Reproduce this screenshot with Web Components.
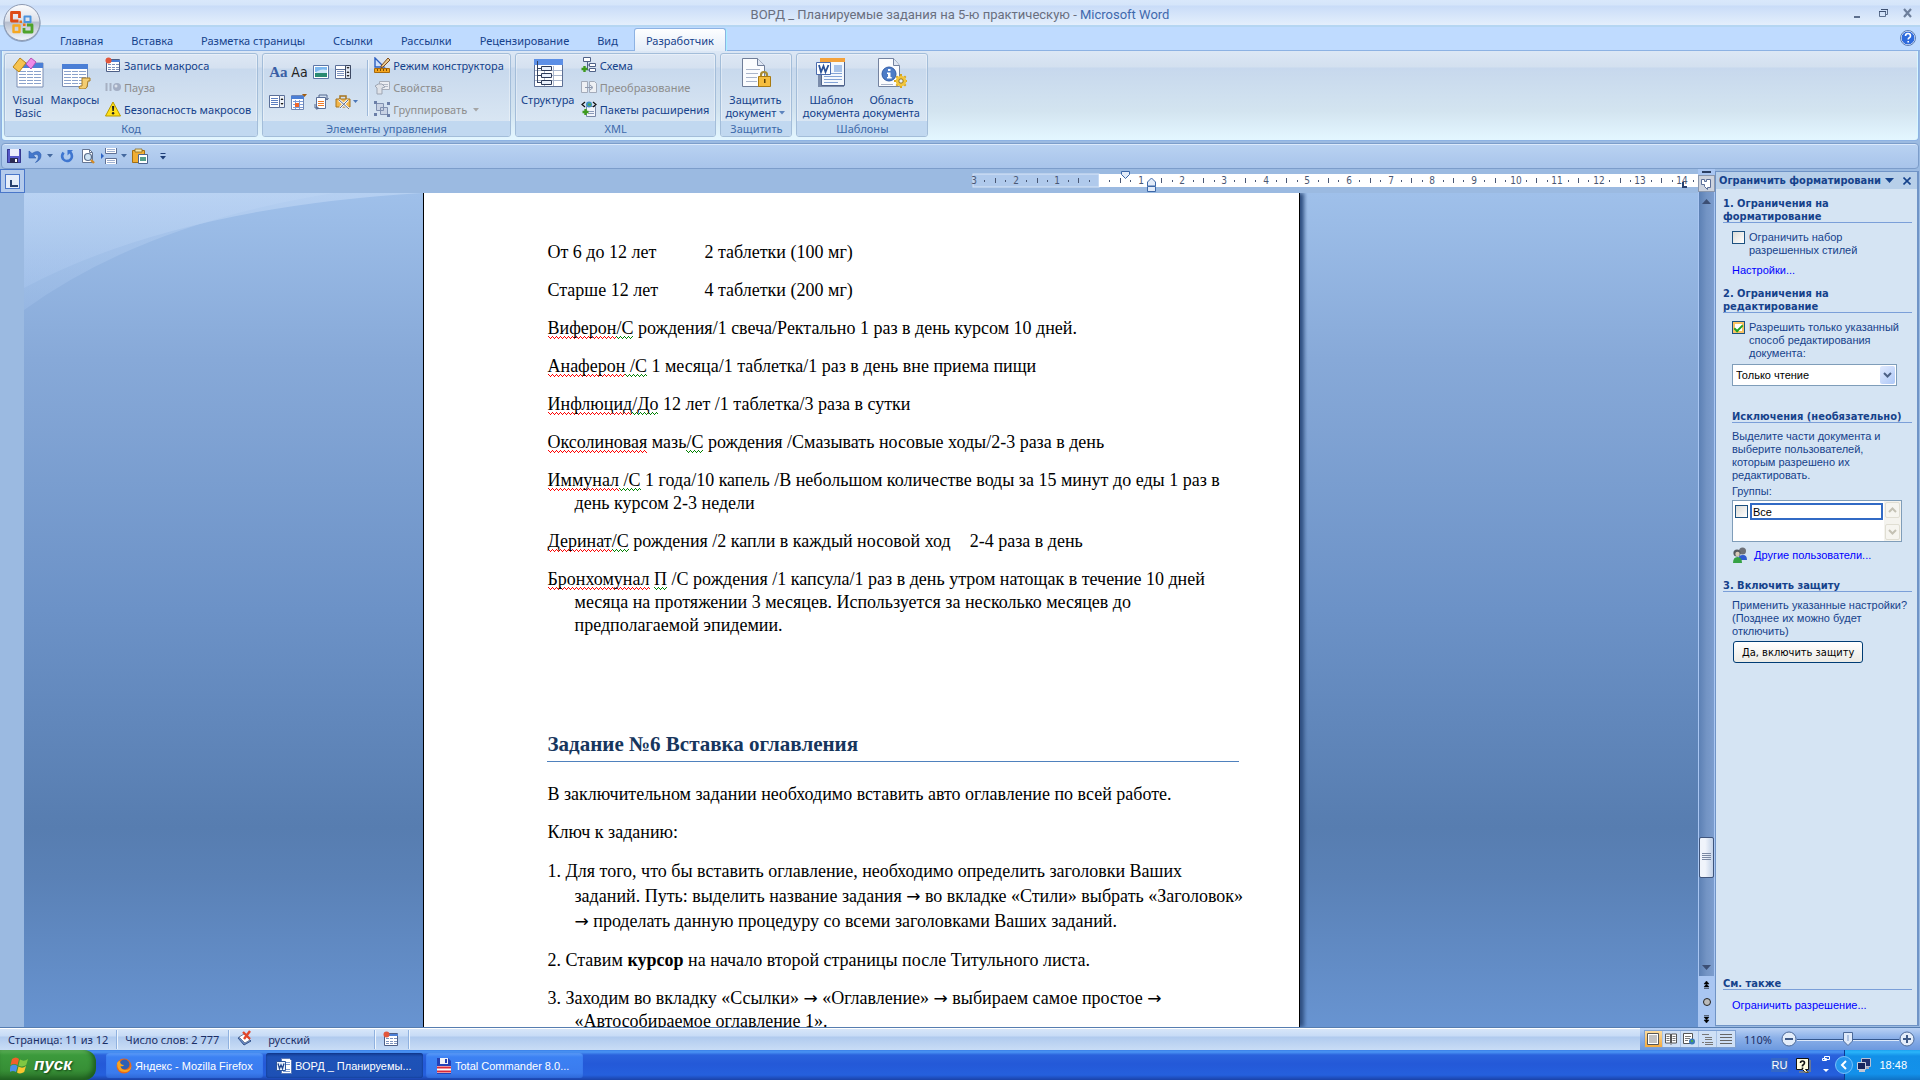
<!DOCTYPE html>
<html lang="ru">
<head>
<meta charset="utf-8">
<title>ВОРД _ Планируемые задания на 5-ю практическую - Microsoft Word</title>
<style>
html,body{margin:0;height:100%;overflow:hidden;background:#9bbae1}
</style>
</head>
<body>
<word-app></word-app>
<script>
const ICONS = {
orb:`<svg viewBox="0 0 40 40" width="40" height="40"><defs><linearGradient id="o" x1="0" y1="0" x2="0" y2="1"><stop offset="0" stop-color="#fdfdfe"/><stop offset=".45" stop-color="#dbe0ea"/><stop offset=".5" stop-color="#b7bfcf"/><stop offset="1" stop-color="#f4f7fb"/></linearGradient></defs><circle cx="20" cy="20.500" r="18.500" fill="#6d7f9c" opacity=".6"/><circle cx="20" cy="19.500" r="18" fill="url(#o)" stroke="#8e9bb3"/><g fill="none" stroke-width="2.800" stroke-linejoin="round"><path d="M17.500 15v-5.500h-8v8.500h7" stroke="#dd4b16"/><path d="M22.500 13.500h6v5.500h-6z" stroke="#4b93dd" stroke-width="2"/><path d="M11.500 22.500h6v6.500h-6z" stroke="#f6a821" stroke-width="2.400"/><path d="M22 25v4h8v-7h-5" stroke="#4fa32a"/></g><path d="M17.500 17.500h2.500v2.500h-2.500zM21 20.500h2.500V23H21z" fill="#e8731a"/></svg>`,
vb:`<svg viewBox="0 0 32 32" width="32" height="32"><path d="M5 6h26v24H5z" fill="#fff" stroke="#7b8eb4"/><path d="M5 6h26v5H5z" fill="#4b7fd6"/><path d="M7 14.500h22M7 17.500h22M7 20.500h22M7 23.500h22M7 26.500h22" stroke="#8aa2cc"/><path d="M14.500 12v17M21.500 12v17" stroke="#fff"/><path d="M1 10 8 1l6 5-7 9z" fill="#f6c350" stroke="#b98316"/><path d="m14 7 5-6 5 4-5 7z" fill="#ee8be8" stroke="#b653b5"/></svg>`,
macros:`<svg viewBox="0 0 32 32" width="32" height="32"><path d="M3.500 7.500h25v22h-25z" fill="#fff" stroke="#7b8eb4"/><path d="M3 7h26v5H3z" fill="#4b7fd6"/><path d="M5 14.500h22M5 17.500h22M5 20.500h22M5 23.500h22M5 26.500h22" stroke="#8aa2cc"/><path d="M12.500 13v16M19.500 13v16" stroke="#fff"/><path d="M23 21h8v3h-2l-1 6q-1 2-3 2h-4q-2-2 0-3h2z" fill="#f3cd73" stroke="#a77b25"/></svg>`,
record:`<svg viewBox="0 0 16 16" width="16" height="16"><path d="M1.500 2.500h13v12h-13z" fill="#fff" stroke="#4d5f86"/><path d="M4 3h11v2H4z" fill="#4b7fd6"/><path d="M3 7.500h3M7 7.500h3M11 7.500h3M3 10.500h3M7 10.500h3M11 10.500h3M3 12.500h3M7 12.500h3M11 12.500h3" stroke="#7d92bd"/><circle cx="3.500" cy="3.500" r="3" fill="#e2563b"/></svg>`,
pause:`<svg viewBox="0 0 16 16" width="16" height="16"><path d="M.500 4h2v8h-2zM4.500 4h2v8h-2z" fill="#a6b0c2"/><circle cx="12" cy="8" r="4" fill="#a3aec4"/><circle cx="11" cy="7" r="1.500" fill="#d9dfe9"/></svg>`,
warn:`<svg viewBox="0 0 16 16" width="16" height="16"><path d="M8 1 15.500 15H.5z" fill="#ffe019" stroke="#b79a00" stroke-linejoin="round"/><path d="M7 5h2.200l-.4 5H7.400z" fill="#222"/><circle cx="8.100" cy="12.300" r="1.200" fill="#222"/></svg>`,
pic:`<svg viewBox="0 0 16 16" width="16" height="16"><path d="M.5 1.500h15v13H.5z" fill="#fff" stroke="#5d76a6"/><path d="M2 3h12v5H2z" fill="#7db8ef"/><path d="M2 9q5-5 12-3v3z" fill="#cfe6f8"/><path d="M2 9h12v4H2z" fill="#2a8a72"/></svg>`,
combo:`<svg viewBox="0 0 16 16" width="16" height="16"><path d="M.5 1.500h15v4H.5zM.5 5.500h10v9H.5z" fill="#fff" stroke="#5b6f98"/><path d="M10.500 1.500h5v13h-5z" fill="#dfe5f0" stroke="#3d4963"/><path d="M2 7.500h7M2 9.500h7M2 11.500h7" stroke="#7d92bd"/><path d="M11.500 3h3L13 5zM11.500 9h3L13 7zM11.500 11h3L13 13z" fill="#222"/></svg>`,
list:`<svg viewBox="0 0 16 16" width="16" height="16"><path d="M.5 1.500h10v12H.5z" fill="#fff" stroke="#5b6f98"/><path d="M10.500 1.500h5v12h-5z" fill="#eef2f8" stroke="#5b6f98"/><path d="M2 4.500h7M2 6.500h7M2 8.500h7M2 10.500h7" stroke="#5d7fc0"/><path d="M11.500 6h3L13 4zM11.500 9h3L13 11z" fill="#111"/></svg>`,
cal:`<svg viewBox="0 0 16 16" width="16" height="16"><path d="M.5 1.500h12v14H.5z" fill="#fff" stroke="#6e86b5"/><path d="M0 2h13v3H0z" fill="#4b7fd6"/><path d="M2 7.500h10M2 10.500h10M2 13.500h10M4.500 6v9M8.500 6v9" stroke="#7d9bd6"/><path d="M4 9h4v4H4z" fill="#f0662a"/><path d="M11 0h5l-2.500 3z" fill="#a05c10"/></svg>`,
formpg:`<svg viewBox="0 0 16 16" width="16" height="16"><path d="M3.500 3.500h9v11h-9z" fill="#fff" stroke="#5b6f98"/><path d="M5 7.500h6M5 9.500h6M5 11.500h6" stroke="#ef7b28"/><path d="M6 3V1h8v4M2 10v4h3M12.500 4l1.500 2 1.500-2M3.500 12.500 5.500 14l-2 1.500" fill="none" stroke="#55698f"/></svg>`,
tools:`<svg viewBox="0 0 24 16" width="24" height="16"><path d="M1 5h14v8H1z" fill="#f2b64a" stroke="#a7741c"/><path d="M5 5V2h6v3" fill="none" stroke="#a7741c" stroke-width="1.500"/><path d="m4 6 10 9M13 6l-8 8" stroke="#f2f4f8" stroke-width="2.600"/><path d="m4 6 10 9M13 6l-8 8" stroke="#62708c"/><path d="M18 6h5l-2.500 3z" fill="#4a76b8"/></svg>`,
design:`<svg viewBox="0 0 16 16" width="16" height="16"><path d="M1 1v9h9z" fill="#cfe0fb" stroke="#2c5fc0" stroke-width="1.400"/><path d="M.5 11.500h15v4H.5z" fill="#f4a51d" stroke="#a8690a"/><path d="M3.500 12v2M6.500 12v2M9.500 12v2M12.500 12v2" stroke="#7a4b04"/><path d="m7 9 7-8 2 2-7 7-2 .5z" fill="#e9c98c" stroke="#7d4a1c"/></svg>`,
props:`<svg viewBox="0 0 16 16" width="16" height="16"><path d="M5.500 2.500h10v8h-10z" fill="#eceef2" stroke="#a7aeba"/><path d="M8 5.500h6M8 7.500h6" stroke="#b4bac6"/><path d="M1 7q3-3 7-2l3 3-3 1v6H3V9z" fill="#dfe2e8" stroke="#9da5b3"/></svg>`,
group:`<svg viewBox="0 0 16 16" width="16" height="16"><path d="M2.500 2.500h7v7h-7zM6.500 6.500h7v7h-7z" fill="#c8d2e4" stroke="#8090b0"/><path d="M0 0h3v3H0zM13 1h3v3h-3zM0 12h3v3H0zM13 13h3v3h-3z" fill="#6b7fa8"/></svg>`,
struct:`<svg viewBox="0 0 32 32" width="32" height="32"><path d="M2.500 2.500h28v27h-28z" fill="#fff" stroke="#5c6f94"/><path d="M2 2h29v6H2z" fill="#5c8fe6"/><path d="M3 13.500h27M3 18.500h27M3 23.500h27M12.500 9v20M21.500 9v20" stroke="#a9b6cd"/><path d="M5.500 4v22M5.500 11.500h4M5.500 18.500h4M5.500 25.500h4" stroke="#33415e" fill="none"/><path d="M9.500 9.500h10v4h-10zM9.500 16.500h10v4h-10zM9.500 23.500h10v4h-10z" fill="#e9f0fb" stroke="#2c3a58"/></svg>`,
schema:`<svg viewBox="0 0 16 16" width="16" height="16"><path d="M2.500.5h7v4h-7zM8.500 6.500h6v3h-6zM8.500 11.500h6v3h-6z" fill="#fff" stroke="#4f6186"/><path d="M6.500 5v8h2M6.500 8h2" fill="none" stroke="#4f6186"/><path d="M3.500 9v6M.5 12h6" stroke="#3c9a1d" stroke-width="2.400"/></svg>`,
transf:`<svg viewBox="0 0 16 16" width="16" height="16"><path d="M.5 2.500h6v11h-6zM8.500 2.500h5l2 2v9h-7z" fill="#eef0f4" stroke="#a3abba"/><path d="M4 8.500h7M9 6l3 2.500L9 11" fill="none" stroke="#8d98ae"/></svg>`,
packs:`<svg viewBox="0 0 16 16" width="16" height="16"><path d="M5.500 5.500h9v10h-9z" fill="#f1f4fa" stroke="#7887a6"/><path d="M7 10.500h6M7 12.500h6" stroke="#8c9bb9"/><path d="M4 1 1 3.500 4 6M12 1l3 2.500L12 6" fill="none" stroke="#111" stroke-width="1.200"/><circle cx="8" cy="3.500" r="3" fill="#3e8fc4"/><path d="M7 2.500h3v2H7z" fill="#4bab4a"/><path d="M4.500 8v6M1.500 11h6" stroke="#3c9a1d" stroke-width="2.400"/></svg>`,
protect:`<svg viewBox="0 0 32 32" width="32" height="32"><path d="M3.500 1.500h15l7 7v21h-22z" fill="#fbfcfe" stroke="#6f7d98"/><path d="M18.500 1.500v7h7" fill="#dfe6f2" stroke="#6f7d98"/><path d="M7 12.500h14M7 16.500h12M7 20.500h11M7 24.500h11" stroke="#aab5ca"/><path d="M22 20v-2q0-3 3-3t3 3v2" fill="none" stroke="#a98b32" stroke-width="2.200"/><path d="M19.500 19.500h12v10h-12z" fill="#f5bd3e" stroke="#a87a12"/><path d="M25 22h1.500v4H25z" fill="#5b3f05"/></svg>`,
tmpl:`<svg viewBox="0 0 32 32" width="32" height="32"><path d="M3 10h26v20H3z" fill="#7b8cab"/><path d="M6.500 2.500h23v26h-23z" fill="#f4f8fd" stroke="#50648c"/><path d="M5 1h25v4H5z" fill="#f3a23b"/><path d="M9 16.500h18M9 19.500h18M9 22.500h18M9 25.500h14" stroke="#83a3d6"/><path d="M19 8h8v7h-8z" fill="#a7c2e8"/><path d="M1.500 5.500h14v12h-14z" fill="#fff" stroke="#4b6cae"/><path d="m4 8 2 7 2.500-6 2 6 3-7" fill="none" stroke="#2a5298" stroke-width="1.800"/></svg>`,
area:`<svg viewBox="0 0 32 32" width="32" height="32"><path d="M3.500 1.500h15l6 7v21h-21z" fill="#fbfcfe" stroke="#7483a0"/><path d="M18.500 1.500v7h6" fill="#dfe6f2" stroke="#7483a0"/><path d="M6 27.500h12" stroke="#aab5ca"/><circle cx="14" cy="17" r="7" fill="#4d7cc7" stroke="#2f5ba6"/><path d="M13 12h2.500v2H13zM12 15.500h3.500v4.500h1.200v1.500H12V20h1v-3h-1z" fill="#fff"/><path d="M26 17v3M26 28v3M19 24h3M30 24h2M21.300 19.300l2 2M28.700 26.700l2 2M21.300 28.700l2-2M28.700 21.300l2-2" stroke="#d7a51e" stroke-width="2"/><circle cx="26" cy="24" r="3.800" fill="none" stroke="#f2c53c" stroke-width="3"/><circle cx="26" cy="24" r="2.200" fill="#e8f0fa" stroke="#9a7410"/></svg>`,
help:`<svg viewBox="0 0 16 16" width="16" height="16"><circle cx="8" cy="8" r="7" fill="#2f6bdc" stroke="#fff"/><circle cx="8" cy="8" r="7.500" fill="none" stroke="#3a5f9f" stroke-width=".8"/><path d="M5.500 6q0-2.500 2.500-2.500T10.500 6q0 1.200-1.500 2-.8.500-.8 1.500M8.200 11v1.500" fill="none" stroke="#fff" stroke-width="1.600"/></svg>`,
save:`<svg viewBox="0 0 16 16" width="16" height="16"><path d="M1 1h14v14H1z" fill="#5558c9"/><path d="M1.500 1.500h13v13h-13z" fill="none" stroke="#35378f"/><path d="M4 1h9v7H4z" fill="#eceefb"/><path d="M4 10h8v5H4z" fill="#2a2b55"/><path d="M9 11h2v3H9z" fill="#fff"/></svg>`,
undo:`<svg viewBox="0 0 16 16" width="16" height="16"><path d="M2 3v7h7L6.500 7.500Q11 4.500 11.500 9q0 3-3 5.500 6-2.500 5.500-8Q12 1 5 5.500z" fill="#4478cc" stroke="#2d5cab" stroke-width=".6"/></svg>`,
redo:`<svg viewBox="0 0 16 16" width="16" height="16"><path d="M4.500 4.500Q2 8 4 11q2.500 3 6.300 1.500Q14 10.500 12.500 6 12 5 11 4" fill="none" stroke="#3f76d0" stroke-width="2.600"/><path d="M8.500 2H14l-5.500 5.500z" fill="#3f76d0"/></svg>`,
preview:`<svg viewBox="0 0 16 16" width="16" height="16"><path d="M2.500 1.500h7l3 3v10h-10z" fill="#fff" stroke="#667693"/><path d="M9.500 1.500v3h3" fill="none" stroke="#667693"/><circle cx="8" cy="9" r="3.500" fill="#cfe4f4" stroke="#5b6e8d" stroke-width="1.200"/><path d="m11 12 3 3" stroke="#d08a28" stroke-width="2.400"/></svg>`,
pbreak:`<svg viewBox="0 0 16 16" width="16" height="16"><path d="M4.500 0v5.500h11V0M4.500 16v-5.500h11V16" fill="#fff" stroke="#5f7196"/><path d="M6 1.500h8M6 3.500h8M6 12.500h8M6 14.500h8" stroke="#9fb0d0"/><path d="M0 5v6l3-3z" fill="#2f65c4"/></svg>`,
paste:`<svg viewBox="0 0 16 16" width="16" height="16"><path d="M.5 2.500h12v12H.5z" fill="#f0ae35" stroke="#a36f12"/><path d="M3 1h7v3H3z" fill="#f8e7a8" stroke="#8c6a20" stroke-width=".8"/><path d="M6.500 6.500h9v9h-9z" fill="#fff" stroke="#4d658f"/><path d="M8 9h6v4H8z" fill="#54a08c"/></svg>`,
down:`<svg viewBox="0 0 6 4" width="6" height="4"><path d="M0 0h6L3 3.500z" fill="currentColor"/></svg>`,
more:`<svg viewBox="0 0 6 8" width="6" height="8"><path d="M.5 1.500h5" stroke="#1f3f78"/><path d="M0 4h6L3 7.500z" fill="#1f3f78"/></svg>`,
users:`<svg viewBox="0 0 16 16" width="16" height="16"><circle cx="10.500" cy="4" r="3.500" fill="#6d7077"/><path d="M6 13q0-5 5-5 4 0 4 5z" fill="#2f5bd0"/><circle cx="5" cy="6" r="3.600" fill="#555a60"/><circle cx="5.500" cy="7" r="2.200" fill="#d9c9b8"/><path d="M1 16q0-6 4.500-6T10 16z" fill="#35a244"/></svg>`,
proof:`<svg viewBox="0 0 18 18" width="18" height="18"><path d="m2 8 7-3 6 6-7 4z" fill="#6a8bc4" stroke="#35558f"/><path d="m3 7 5-3 6 6-5 3z" fill="#fff" stroke="#6d7f9c"/><path d="m7 2 7 7M14 1 8 9" stroke="#e2472a" stroke-width="2.400"/></svg>`,
flag:`<svg viewBox="0 0 20 20" width="20" height="20"><path d="M2 4q4-3 7 0L7.500 10q-3-2-7 0z" fill="#f0602a"/><path d="M10 4.500q4 2.500 8-.5l-1.800 6q-4 2.500-7.700.5z" fill="#7fc742"/><path d="M.5 11q3.500-2.500 7 0L6 17q-3-2-6.500 0z" fill="#4b8fe8"/><path d="M8.500 11.500q4 2.500 7.500-.5l-1.800 6q-4 2.500-7.200.5z" fill="#fbc62f"/></svg>`,
ff:`<svg viewBox="0 0 16 16" width="16" height="16"><circle cx="8" cy="8" r="7.500" fill="#e8671b"/><circle cx="8.500" cy="6.500" r="5" fill="#2f5fb5"/><path d="M1 5q0 9 8 9 5 0 6.500-6-2 4-6 4Q5 12 4.500 8 7 9 8 7 4 7 4 3 2 3 1 5z" fill="#f9a51f"/></svg>`,
word:`<svg viewBox="0 0 16 16" width="16" height="16"><path d="M5.500.5h8l2 2v13h-10z" fill="#fff" stroke="#5b7ab8"/><path d="M7 4.500h7M7 6.500h7M7 11.500h7M7 13.500h7" stroke="#7d9bd4"/><path d="M.5 3.500h9v9h-9z" fill="#e9f0fc" stroke="#2a549c"/><path d="m2 5.500 1.500 5L5 7l1.500 3.500L8 5.500" fill="none" stroke="#1f4690" stroke-width="1.300"/></svg>`,
floppy:`<svg viewBox="0 0 16 16" width="16" height="16"><path d="M1 0h11l3 3v13H1z" fill="#2342b8"/><path d="M4 0h8v6H4z" fill="#f0f2f8"/><path d="M9 1h2v4H9z" fill="#2342b8"/><path d="M1 8h14v7H1z" fill="#fff"/><path d="M1 9.500h14M1 13.500h14" stroke="#d8283a" stroke-width="2"/></svg>`,
langhelp:`<svg viewBox="0 0 16 16" width="16" height="16"><path d="M1.500 1.500h12v11h-3l3 3h-3l-3-3h-6z" fill="#fffce0" stroke="#111"/><path d="M15 3v12M14 15H4" stroke="#a5925a"/><path d="M5.500 6q0-2 2-2t2 2q0 1-2 2.500v1M7.500 10.500V12" fill="none" stroke="#111" stroke-width="1.600"/></svg>`,
minirest:`<svg viewBox="0 0 8 20" width="8" height="20"><path d="M2.500 1.500h5v3h-5zM.5 3.500h4v2h-4z" fill="none" stroke="#fff"/><path d="M1 14h6l-3 3z" fill="#fff"/></svg>`,
chev:`<svg viewBox="0 0 18 18" width="18" height="18"><circle cx="9" cy="9" r="8.500" fill="#2596ee" stroke="#8fd0ff" stroke-width=".8"/><path d="M11 5 7 9l4 4" fill="none" stroke="#fff" stroke-width="2"/></svg>`,
net:`<svg viewBox="0 0 16 16" width="16" height="16"><path d="M5.500 1.500h9v8h-9z" fill="#20306f" stroke="#b9c2d6"/><path d="M9 10h4v2H9z" fill="#aab"/><path d="M1.500 5.500h8v7h-8z" fill="#16245c" stroke="#c8cfdf"/><path d="M3 13h6v2H3z" fill="#c3c8d4"/></svg>`,
minus:`<svg viewBox="0 0 16 16" width="16" height="16"><circle cx="8" cy="8" r="7" fill="#e3edfa" stroke="#4c6a9a"/><path d="M4 7h8v2H4z" fill="#3f5b88"/></svg>`,
plus:`<svg viewBox="0 0 16 16" width="16" height="16"><circle cx="8" cy="8" r="7" fill="#e3edfa" stroke="#4c6a9a"/><path d="M7 4h2v3h3v2H9v3H7V9H4V7h3z" fill="#3f5b88"/></svg>`,
knob:`<svg viewBox="0 0 10 14" width="10" height="14"><path d="M.5.500h9v8.500L5 13.500.5 9z" fill="#dfeafa" stroke="#4c6a9a"/><path d="M5 3v6" stroke="#7d9bcb"/></svg>`,
v1:`<svg viewBox="0 0 12 12" width="12" height="12"><path d="M.5.500h11v11H.5z" fill="#fff" stroke="#555"/><path d="M2 3h8M2 5h8M2 7h8M2 9h8" stroke="#666" stroke-width=".8"/></svg>`,
v2:`<svg viewBox="0 0 12 12" width="12" height="12"><path d="M.5 1h5v9h-5zM6.500 1h5v9h-5z" fill="#fff" stroke="#555"/><path d="M1.500 3.500h3M1.500 5.500h3M1.500 7.500h3M7.500 3.500h3M7.500 5.500h3M7.500 7.500h3M6 10v2" stroke="#777"/></svg>`,
v3:`<svg viewBox="0 0 12 12" width="12" height="12"><path d="M.5.500h9v10h-9z" fill="#fff" stroke="#555"/><path d="M2 3.500h6M2 5.500h5M2 7.500h3" stroke="#777"/><circle cx="9" cy="8.500" r="3" fill="#3a78b8"/><path d="M8 7h2v2H8z" fill="#4aa84a"/></svg>`,
v4:`<svg viewBox="0 0 12 12" width="12" height="12"><path d="M1 1.500h7M4 4.500h7M4 6.500h7M1 9.500h2M4 9.500h8M4 11.500h8" stroke="#777"/></svg>`,
v5:`<svg viewBox="0 0 12 12" width="12" height="12"><path d="M0 1.500h12M0 4.500h12M0 7.500h12M0 10.500h12" stroke="#666"/></svg>`,
wmin:`<svg viewBox="0 0 10 12" width="10" height="12"><path d="M1 9h6v2H1z" fill="#5c6f8e"/></svg>`,
wrest:`<svg viewBox="0 0 10 12" width="10" height="12"><path d="M3.500 2.500h6v5h-2M1.500 4.500h6v5h-6z" fill="none" stroke="#5c6f8e"/><path d="M1 4h7v1H1zM3 2h7v1H3z" fill="#3f5272"/></svg>`,
wclose:`<svg viewBox="0 0 10 12" width="10" height="12"><path d="m1 2 7 8M8 2l-7 8" stroke="#6d7f9c" stroke-width="2.200"/></svg>`
};
const define = (tag, html, after) => {
  const t = document.createElement('template');
  t.innerHTML = html;
  customElements.define(tag, class extends HTMLElement {
    constructor() { super(); this.attachShadow({mode:'open'}).append(t.content.cloneNode(true)); }
    connectedCallback() { if (after) after(this, this.shadowRoot); }
  });
};
const RESET = `*,:host{box-sizing:border-box}button{font:inherit;color:inherit;background:none;border:0;padding:0;margin:0}`;

define('ui-icon', `<style>:host{display:inline-flex;flex:none}svg{display:block}</style>`,
  (el, r) => { if (!r.querySelector('svg')) r.append(document.createRange().createContextualFragment(ICONS[el.getAttribute('name')])); });

define('title-bar', `<style>${RESET}
:host{display:flex;height:27px;flex:none;align-items:center;justify-content:center;position:relative;padding-top:3px;font:13px Roboto,sans-serif;color:#696f80;
background:linear-gradient(#d9e8fb 0,#d5e5fa 5px,#c9dcf8 6px,#e4effc 25px);border-bottom:2px solid #b5d6f2;white-space:pre}
b{font-weight:400;color:#3f69ad}
.orb{position:absolute;left:2px;top:3px;z-index:5}
.win{position:absolute;right:7px;top:7px;display:flex;gap:15px}</style>
<span>ВОРД _ Планируемые задания на 5-ю практическую - <b>Microsoft Word</b></span>
<button class="orb" aria-label="Office"><ui-icon name="orb"></ui-icon></button>
<div class="win"><button aria-label="Свернуть"><ui-icon name="wmin"></ui-icon></button><button aria-label="Восстановить"><ui-icon name="wrest"></ui-icon></button><button aria-label="Закрыть"><ui-icon name="wclose"></ui-icon></button></div>`);

define('tab-row', `<style>${RESET}
:host{display:flex;height:24px;flex:none;background:#bfdbff;padding:1px 4px 0 48px;gap:4px;border-bottom:1px solid #8db2e3;font:11px "Noto Sans",sans-serif;color:#15428b}
button.t{padding:0 11px;height:23px;line-height:23px;border:1px solid transparent;border-bottom:0;border-radius:3px 3px 0 0}
button.on{background:linear-gradient(#fdfeff,#e4edf8);border-color:#8db2e3;box-shadow:1px 0 0 #a6f0ff}
i{flex:1}.h{height:22px}</style>
<button class="t">Главная</button><button class="t">Вставка</button><button class="t">Разметка страницы</button><button class="t">Ссылки</button><button class="t">Рассылки</button><button class="t">Рецензирование</button><button class="t">Вид</button><button class="t on">Разработчик</button><i></i><button class="h" aria-label="Справка"><ui-icon name="help"></ui-icon></button>`);

define('ribbon-group', `<style>${RESET}
:host{display:flex;flex-direction:column;height:84px;border:1px solid #a3bdd9;border-radius:3px;box-shadow:inset 0 0 0 1px rgba(255,255,255,.35);background:linear-gradient(#dde7f4 0,#d5e1f0 14px,#c8d9ed 15px,#d9e6f3 68px);overflow:hidden}
.b{display:flex;flex:1;padding:0 6px 0 4px}
.c{height:15px;line-height:15px;text-align:center;background:#c1d8f0;color:#3e6aaa}</style>
<div class="b"><slot></slot></div><div class="c"></div>`, (el, r) => r.querySelector('.c').textContent = el.getAttribute('label'));

define('big-button', `<style>${RESET}
:host{display:flex;justify-content:center}
button{display:flex;flex-direction:column;align-items:center;padding-top:3px;gap:4px;line-height:13px;text-align:center;white-space:nowrap}</style>
<button><ui-icon></ui-icon><span><slot></slot></span></button>`, (el, r) => { const i = document.createElement('ui-icon'); i.setAttribute('name', el.getAttribute('icon')); r.querySelector('ui-icon').replaceWith(i); });

define('small-button', `<style>${RESET}
:host{display:flex}
:host([off]) button{color:#8d8d8d}
button{display:flex;align-items:center;gap:3px;height:22px;white-space:nowrap}</style>
<button><ui-icon></ui-icon><span><slot></slot></span></button>`, (el, r) => { const i = document.createElement('ui-icon'); i.setAttribute('name', el.getAttribute('icon')); r.querySelector('ui-icon').replaceWith(i); if (el.hasAttribute('off')) r.querySelector('button').disabled = true; });

define('ribbon-bar', `<style>${RESET}
:host{display:flex;flex:none;height:90px;gap:4px;margin:0 1px;padding:2px 2px 0;font:11px "Noto Sans",sans-serif;color:#15428b;
background:linear-gradient(#dce7f5 0,#d3e0ef 16px,#c7d8ed 17px,#d3e4f0 60px,#e3f6ff 88px);border:1px solid #8db2e3;border-top:0;border-radius:0 0 4px 4px;box-shadow:inset 1px 0 0 #d8f7ff,inset -1px 0 0 #d8f7ff}
.s{display:flex;flex-direction:column}
.g{display:grid;grid-template-columns:22px 22px 22px 26px;grid-template-rows:30px 30px;align-items:center;padding:3px 0 0 2px}
.g button{display:flex}
.aa{font:bold 15px "Liberation Serif",serif;color:#3a5fa5}.ab{font:14px "DejaVu Sans Condensed",sans-serif;color:#222}
.v{width:1px;height:56px;margin:6px 6px 0;background:#9db8d9;box-shadow:1px 0 0 #eef5fc}
ui-icon[name=down]{margin-left:3px;vertical-align:2px;color:#5d84bd}small-button ui-icon[name=down]{color:#a5a5a5}
.w38{width:38px}.w54{width:54px;margin:0 3px 0 1px}.w56{width:56px;margin-right:5px}.w60{width:60px}</style>
<ribbon-group label="Код"><big-button class="w38" icon="vb">Visual<br>Basic</big-button><big-button class="w54" icon="macros">Макросы</big-button>
<div class="s"><small-button icon="record">Запись макроса</small-button><small-button icon="pause" off>Пауза</small-button><small-button icon="warn">Безопасность макросов</small-button></div></ribbon-group>
<ribbon-group label="Элементы управления"><div class="g"><button class="aa">Aa</button><button class="ab">Aa</button><button aria-label="Рисунок"><ui-icon name="pic"></ui-icon></button><button aria-label="Поле со списком"><ui-icon name="combo"></ui-icon></button><button aria-label="Список"><ui-icon name="list"></ui-icon></button><button aria-label="Дата"><ui-icon name="cal"></ui-icon></button><button aria-label="Стандартные блоки"><ui-icon name="formpg"></ui-icon></button><button aria-label="Инструменты"><ui-icon name="tools"></ui-icon></button></div><div class="v"></div>
<div class="s"><small-button icon="design">Режим конструктора</small-button><small-button icon="props" off>Свойства</small-button><small-button icon="group" off>Группировать <ui-icon name="down"></ui-icon></small-button></div></ribbon-group>
<ribbon-group label="XML"><big-button class="w56" icon="struct">Структура</big-button>
<div class="s"><small-button icon="schema">Схема</small-button><small-button icon="transf" off>Преобразование</small-button><small-button icon="packs">Пакеты расширения</small-button></div></ribbon-group>
<ribbon-group label="Защитить"><big-button class="w60" icon="protect">Защитить<br>документ<ui-icon name="down"></ui-icon></big-button></ribbon-group>
<ribbon-group label="Шаблоны"><big-button class="w60" icon="tmpl">Шаблон<br>документа</big-button><big-button class="w60" icon="area">Область<br>документа</big-button></ribbon-group>`);

define('quick-bar', `<style>${RESET}
:host{display:flex;flex:none;align-items:center;height:26px;margin:2px 1px 0;padding:0 4px;background:linear-gradient(#b9d2f2,#a8c4ea);border:1px solid #7c9dca;border-radius:4px;box-shadow:inset 0 1px 0 #dbe9fb;color:#44699f}
button{display:flex;align-items:center;gap:4px;margin-right:5px}
.w{margin-right:6px}.p{margin-right:12px;gap:2px}</style>
<button aria-label="Сохранить"><ui-icon name="save"></ui-icon></button><button class="w" aria-label="Отменить"><ui-icon name="undo"></ui-icon><ui-icon name="down"></ui-icon></button><button aria-label="Повторить"><ui-icon name="redo"></ui-icon></button><button aria-label="Просмотр"><ui-icon name="preview"></ui-icon></button><button aria-label="Разрыв"><ui-icon name="pbreak"></ui-icon><ui-icon name="down"></ui-icon></button><button class="p" aria-label="Вставить"><ui-icon name="paste"></ui-icon></button><button aria-label="Настройка"><ui-icon name="more"></ui-icon></button>`);

define('doc-ruler', `<style>${RESET}
:host{display:flex;height:24px;flex:none;justify-content:space-between;background:#9bbae1}
.tab{width:25px;height:24px;border:1px solid #4a77c9;background:#b4cbec;display:flex;align-items:center;justify-content:center}
.tab i{width:15px;height:15px;border:1px solid #4a77c9;background:#e6eefa;display:block;padding:5px 4px}
.tab i:after{content:"";display:block;width:6px;height:5px;border-left:2px solid #26406e;border-bottom:2px solid #26406e}
svg{display:block;overflow:visible}text{font:10px "DejaVu Sans Condensed",sans-serif;fill:#4a5874;text-anchor:middle}</style>
<button class="tab" aria-label="Табуляция"><i></i></button><svg width="725" height="24"></svg>`, (el, r) => {
  let s = '<rect x="0" y="5" width="126" height="13" fill="#b0caec" stroke="#d9e6f8"/><rect x="126" y="5" width="599" height="13" fill="#fff"/>';
  const u = 41.65;
  for (let q = -12; q <= 57; q++) {
    const x = Math.round(126 + q * u / 4);
    if (q === 0) continue;
    if (q % 4 === 0) s += `<text x="${x}" y="15">${Math.abs(q / 4)}</text>`;
    else if (q % 2 === 0) s += `<path d="M${x + .5} 9v5" stroke="#4a5874"/>`;
    else s += `<path d="M${x + .5} 11v2" stroke="#4a5874"/>`;
  }
  s += '<path d="M148.500 2.500h8v3l-4 4-4-4z" fill="#e3ecf9" stroke="#3d68a8"/><path d="M174.500 17v-4l4-4 4 4v4zM174.500 17.500h8v5h-8z" fill="#e3ecf9" stroke="#3d68a8"/><path d="M710 13v5h4" fill="none" stroke="#26406e" stroke-width="2"/>';
  r.querySelector('svg').innerHTML = s;
});

define('doc-page', `<style>${RESET}
:host{display:block;width:877px;flex:none;background:#fff;border:solid #000;border-width:0 1px;box-shadow:4px 0 4px #2f4f80;padding:48px 60px 0 124px;font:18px/23px "Liberation Serif",serif;color:#000;position:relative;white-space:nowrap;overflow:hidden;clip-path:inset(0 -8px 0 0)}
p{margin:0 0 15px;padding-left:27px;text-indent:-27px}
p.w{line-height:25px}
i{font:17px/23px "DejaVu Sans",sans-serif}
h1{margin:95px 0 21px -1px;padding:0 0 5px 1px;font:bold 21px/24px "Liberation Serif",serif;color:#17365d;border-bottom:1px solid #4f81bd}
.t{display:inline-block;width:157px;text-indent:0}.g{display:inline-block;width:19px}
u,s{text-decoration:none;padding-bottom:1px;background:0 100%/4px 3px repeat-x}
u{background-image:url("data:image/svg+xml,%3Csvg xmlns='http://www.w3.org/2000/svg' width='4' height='3'%3E%3Cpath d='M0 .5h1M1 1.500h1M2 2.500h1M3 1.500h1' stroke='red'/%3E%3C/svg%3E")}
s{background-image:url("data:image/svg+xml,%3Csvg xmlns='http://www.w3.org/2000/svg' width='4' height='3'%3E%3Cpath d='M0 .5h1M1 1.500h1M2 2.500h1M3 1.500h1' stroke='green'/%3E%3C/svg%3E")}</style>
<p><span class="t">От 6 до 12 лет</span>2 таблетки (100 мг)</p>
<p><span class="t">Старше 12 лет</span>4 таблетки (200 мг)</p>
<p><u>Виферон</u><s>/С</s> рождения/1 свеча/Ректально 1 раз в день курсом 10 дней.</p>
<p><u>Анаферон</u><s> /С</s> 1 месяца/1 таблетка/1 раз в день вне приема пищи</p>
<p><u>Инфлюцид</u><s>/До</s> 12 лет /1 таблетка/3 раза в сутки</p>
<p><u>Оксолиновая</u> мазь<s>/С</s> рождения /Смазывать носовые ходы/2-3 раза в день</p>
<p><u>Иммунал</u><s> /С</s> 1 года/10 капель /В небольшом количестве воды за 15 минут до еды 1 раз в<br>день курсом 2-3 недели</p>
<p><u>Деринат</u><s>/С</s> рождения /2 капли в каждый носовой ход<span class="g"></span>2-4 раза в день</p>
<p><u>Бронхомунал</u> <s>П</s> /С рождения /1 капсула/1 раз в день утром натощак в течение 10 дней<br>месяца на протяжении 3 месяцев. Используется за несколько месяцев до<br>предполагаемой эпидемии.</p>
<h1>Задание №6 Вставка оглавления</h1>
<p>В заключительном задании необходимо вставить авто оглавление по всей работе.</p>
<p>Ключ к заданию:</p>
<p class="w">1. Для того, что бы вставить оглавление, необходимо определить заголовки Ваших<br>заданий. Путь: выделить название задания <i>→</i> во вкладке «Стили» выбрать «Заголовок»<br><i>→</i> проделать данную процедуру со всеми заголовками Ваших заданий.</p>
<p>2. Ставим <b>курсор</b> на начало второй страницы после Титульного листа.</p>
<p>3. Заходим во вкладку «Ссылки» <i>→</i> «Оглавление» <i>→</i> выбираем самое простое <i>→</i><br>«Автособираемое оглавление 1».</p>`);

define('doc-scroll', `<style>${RESET}
:host{display:flex;flex-direction:column;width:17px;flex:none;background:#a9c6f2}
button{display:flex;align-items:center;justify-content:center}
.sp{height:4px;border-top:2px solid #2b3f63;margin:2px 4px 0}
.rb{height:17px;background:#cdd3de;border:1px solid #8a97ad}
.tr{flex:1;display:flex;flex-direction:column;justify-content:space-between;background:linear-gradient(90deg,#5c80b4,#7394c4 50%,#7c9dce);margin:0 1px}
.a{height:18px}
.sl{flex:1;display:flex;flex-direction:column}.sl i{flex:625}.sl i+button+i{flex:80}
.th{height:41px;border:1px solid #3f557c;border-radius:2px;background:linear-gradient(90deg,#f0f4fb 40%,#c3d2e8)}
.n{height:17px}</style>
<button class="sp" aria-label="Разделить"></button><button class="rb" aria-label="Линейка"><svg width="13" height="13"><path d="M1.500 2.500h3v2h2v-2h4v8h-3v2l-3-3v-2h-3z" fill="#fff" stroke="#5b6f98"/></svg></button>
<div class="tr"><button class="a" aria-label="Вверх"><svg width="9" height="5"><path d="M4.500 0 9 5H0z" fill="#3c4f74"/></svg></button><div class="sl"><i></i><button class="th" aria-label="Ползунок"><svg width="9" height="8"><path d="M0 .5h9M0 2.500h9M0 4.500h9M0 6.500h9" stroke="#7b89a3"/></svg></button><i></i></div><button class="a" aria-label="Вниз"><svg width="9" height="5"><path d="M0 0h9L4.500 5z" fill="#3c4f74"/></svg></button></div>
<button class="n" aria-label="Предыдущая"><svg width="7" height="8"><path d="M3.500 0 6 3H1zM3.500 3 6 6H1zM1 7.500h5" fill="#000" stroke="#000" stroke-width=".5"/></svg></button>
<button class="n" aria-label="Объект"><svg width="8" height="8"><circle cx="4" cy="4" r="3.500" fill="#bbb" stroke="#222"/></svg></button>
<button class="n" aria-label="Следующая"><svg width="7" height="8"><path d="M1 .5h5M3.500 5 6 2H1zM3.500 8 6 5H1z" fill="#000" stroke="#000" stroke-width=".5"/></svg></button>`);

define('doc-view', `<style>${RESET}
:host{display:flex;flex-direction:column;flex:1;min-width:0}
.c{flex:1;display:flex;min-height:0;background:#9bbae1;padding-left:24px}
.k{flex:1;display:flex;justify-content:center;position:relative;overflow:hidden;background:linear-gradient(#9fc0ea 0,#87a9d8 20%,#6c92c7 50%,#577db0 76%,#5a81b6 82%,#6894d1 100%)}
.sw{position:absolute;left:0;top:0}</style>
<doc-ruler></doc-ruler><div class="c"><div class="k"><svg class="sw" width="398" height="130"><defs><linearGradient id="s" x1="0" y1="0" x2="0" y2="1"><stop offset="0" stop-color="#bdd5f4" stop-opacity=".75"/><stop offset="1" stop-color="#a6c4ec" stop-opacity=".5"/></linearGradient></defs><path d="M0 0h398Q150 15 0 95z" fill="url(#s)"/><path d="M0 0h310Q120 30 0 117z" fill="url(#s)" opacity=".7"/></svg><doc-page></doc-page></div></div>`);

define('pane-heading', `<style>:host{display:block;font-weight:bold;font-family:"DejaVu Sans Condensed",sans-serif;box-shadow:inset 0 -1px 0 #7b9fd8;white-space:nowrap}</style><slot></slot>`);
define('task-pane', `<style>${RESET}
:host{display:flex;flex-direction:column;width:204px;flex:none;margin:2px 1px 1px 0;border:solid #7094c6;border-width:1px 2px 1px 1px;background:#d5e4f3;font:11px/13px "Liberation Sans",sans-serif;color:#15428b}
header{display:flex;align-items:center;height:17px;background:#b7cfe9;padding:0 4px 0 3px;font:bold 11px/17px "DejaVu Sans Condensed",sans-serif;white-space:nowrap}
header button{display:flex;margin-left:4px}header .x{margin-left:9px}
.b{flex:1;display:flex;flex-direction:column;align-items:stretch;padding:8px 5px 13px 7px}
.i{margin-left:9px}
label.k{display:flex;gap:4px;margin:8px 0 0 9px;white-space:nowrap}
input[type=checkbox]{appearance:none;width:13px;height:13px;margin:0;border:1px solid #1c5180;background:linear-gradient(135deg,#dcdcd7,#fff);flex:none;display:grid;place-items:center}
input.o{background:#fff!important;border-color:#1c5180;box-shadow:inset 0 0 0 2px #f9c364}
input.o:after{content:"";width:7px;height:3px;border:solid #21a121;border-width:0 0 2px 2px;transform:rotate(-45deg)}
a{color:#00f;text-decoration:none;white-space:nowrap}
.sel{display:grid;margin:4px 15px 0 9px}
select{appearance:none;grid-area:1/1;height:22px;border:1px solid #7f9db9;background:#fff;font:11px "Liberation Sans",sans-serif;padding:0 3px;color:#000;border-radius:0}
.ar{grid-area:1/1;justify-self:end;align-self:center;width:15px;height:18px;margin-right:2px;border-radius:2px;background:linear-gradient(135deg,#e1eafe,#aec8f7);display:grid;place-items:center;pointer-events:none;z-index:1}
p{margin:7px 0 0 9px;white-space:nowrap}
.l{display:flex;height:42px;margin:2px 10px 0 9px;border:1px solid #7f9db9;background:#fff;justify-content:space-between}
.l label{display:flex;gap:2px;padding:2px 0 0 2px;align-items:flex-start;flex:1;min-width:0}.l input[type=checkbox]{margin-top:2px}
.l input[type=text]{flex:1;min-width:0;height:17px;border:2px solid #316ac5;padding:0 1px;font:11px "Liberation Sans",sans-serif;color:#000;margin-right:1px;border-radius:0}
.sb{width:17px;display:flex;flex-direction:column;justify-content:space-between;background:#f4f3ee;padding:1px}
.sb button{height:16px;border:1px solid #e0ded3;border-radius:2px;display:grid;place-items:center;background:#f6f5f0}
.ou{display:flex;gap:6px;height:16px;margin:5px 0 16px 9px;align-items:center}
.go{align-self:flex-start;margin:3px 0 0 10px;height:22px;padding:0 8px;border:1px solid #003c74;border-radius:3px;background:linear-gradient(#fff,#ecebe5);color:#000;font:11px "DejaVu Sans Condensed",sans-serif}
.sa{margin-top:auto}</style>
<header><span>Ограничить форматировани</span><button aria-label="Меню"><svg width="9" height="6"><path d="M0 0h9L4.500 5z" fill="#15428b"/></svg></button><button class="x" aria-label="Закрыть"><svg width="8" height="8"><path d="m.5.500 7 7M7.500.500l-7 7" stroke="#15428b" stroke-width="1.600"/></svg></button></header>
<div class="b"><pane-heading>1. Ограничения на<br>форматирование</pane-heading>
<label class="k"><input type="checkbox"><span>Ограничить набор<br>разрешенных стилей</span></label>
<a href="#" style="margin:7px 0 10px 9px">Настройки...</a>
<pane-heading>2. Ограничения на<br>редактирование</pane-heading>
<label class="k"><input class="o" type="checkbox" checked><span>Разрешить только указанный<br>способ редактирования<br>документа:</span></label>
<div class="sel"><select aria-label="Способ редактирования"><option>Только чтение</option></select><span class="ar"><svg width="9" height="7"><path d="m1 1 3.500 3.500L8 1" fill="none" stroke="#4d6185" stroke-width="2"/></svg></span></div>
<pane-heading class="i" style="margin-top:24px">Исключения (необязательно)</pane-heading>
<p>Выделите части документа и<br>выберите пользователей,<br>которым разрешено их<br>редактировать.</p>
<div class="i" style="margin-top:3px">Группы:</div>
<div class="l"><label><input type="checkbox" aria-label="Все"><input type="text" value="Все" aria-label="Группа"></label><div class="sb"><button aria-label="Вверх"><svg width="9" height="6"><path d="m1 5 3.500-3.500L8 5" fill="none" stroke="#c4c1b4" stroke-width="2"/></svg></button><button aria-label="Вниз"><svg width="9" height="6"><path d="m1 1 3.500 3.500L8 1" fill="none" stroke="#c4c1b4" stroke-width="2"/></svg></button></div></div>
<div class="ou"><ui-icon name="users"></ui-icon><a href="#">Другие пользователи...</a></div>
<pane-heading>3. Включить защиту</pane-heading>
<p>Применить указанные настройки?<br>(Позднее их можно будет<br>отключить)</p>
<button class="go">Да, включить защиту</button>
<pane-heading class="sa">См. также</pane-heading>
<a href="#" style="margin:9px 0 0 9px">Ограничить разрешение...</a></div>`);

define('status-bar', `<style>${RESET}
:host{display:flex;flex:none;height:23px;align-items:center;border-top:1px solid #567db0;box-shadow:inset 0 1px 0 #fff;background:linear-gradient(#d9e7f9 0,#c7dbf6 8px,#b0caee 9px,#c9ddf6 22px);font:11px "Noto Sans",sans-serif;color:#1b2f66}
span{height:19px;line-height:19px;border-right:1px solid #8fb1df;box-shadow:1px 0 0 #eef5fd;display:flex;align-items:center;white-space:nowrap}
.r{margin-left:auto;display:flex;align-items:center;height:22px;background:linear-gradient(#b9d1f4,#8bb0e8 45%,#6c99df);padding:0 5px 0 4px}
.v{display:flex;border:1px solid #7c9fd2;background:#cfe0f6;height:18px}
.v button{width:18px;display:grid;place-items:center;border-right:1px solid #a9c3e6}.v button:last-child{border:0}.v .on{background:linear-gradient(#fbdc9f,#f6ab3d)}
output{margin:0 9px 0 8px}.z{display:flex;align-items:center}.z button{display:flex}
.s{width:102px;display:grid;align-items:center;justify-items:center}
.s>*{grid-area:1/1}.s:before{content:"";grid-area:1/1;width:100%;height:1px;background:#35588f;box-shadow:0 1px 0 #dce9fb}
input{appearance:none;width:100%;margin:0;background:none;opacity:0;height:14px}.s ui-icon{z-index:1}</style>
<span style="padding:0 8px">Страница: 11 из 12</span><span style="padding:0 9px 0 8px">Число слов: 2 777</span><span style="padding:0 64px 0 7px;gap:14px"><ui-icon name="proof"></ui-icon>русский</span><span style="padding:0 9px 0 8px"><ui-icon name="record"></ui-icon></span>
<div class="r"><div class="v"><button class="on" aria-label="Разметка"><ui-icon name="v1"></ui-icon></button><button aria-label="Чтение"><ui-icon name="v2"></ui-icon></button><button aria-label="Веб"><ui-icon name="v3"></ui-icon></button><button aria-label="Структура"><ui-icon name="v4"></ui-icon></button><button aria-label="Черновик"><ui-icon name="v5"></ui-icon></button></div><output>110%</output><div class="z"><button aria-label="Мельче"><ui-icon name="minus"></ui-icon></button><div class="s"><input type="range" aria-label="Масштаб" value="50"><ui-icon name="knob"></ui-icon></div><button aria-label="Крупнее"><ui-icon name="plus"></ui-icon></button></div></div>`);

define('task-button', `<style>${RESET}
:host{display:flex;width:157px}
button{flex:1;display:flex;align-items:center;gap:3px;padding:0 10px;height:25px;border-radius:3px;color:#fff;white-space:nowrap;background:linear-gradient(#5b9cf8,#3c81f3 4px,#3a7bee 20px,#2f69d8);box-shadow:inset 0 0 1px #2a5fd0}
:host([on]) button{background:linear-gradient(#143c95,#1e52b7 4px,#1d50b5);box-shadow:inset 0 0 2px #0b2c78}</style>
<button><ui-icon></ui-icon><slot></slot></button>`, (el, r) => { const i = document.createElement('ui-icon'); i.setAttribute('name', el.getAttribute('icon')); r.querySelector('ui-icon').replaceWith(i); });

define('xp-taskbar', `<style>${RESET}
:host{display:flex;flex:none;height:30px;font:11px "Liberation Sans",sans-serif;color:#fff;background:linear-gradient(#3a80e8 0,#4a94f4 2px,#2a62dc 5px,#2459d8 14px,#2560dd 25px,#1a42a8)}
.st{width:96px;display:flex;align-items:center;gap:4px;padding:0 0 0 10px;background:linear-gradient(#5fb35a 0,#3c9a3c 5px,#378f36 20px,#2a7129);border-radius:0 12px 12px 0;box-shadow:inset -3px -2px 5px #1d5c1e;font:italic bold 17px "Liberation Sans",sans-serif;text-shadow:1px 1px 2px #123f12}
.t{display:flex;gap:3px;align-items:center;margin:1px 0 0 10px;flex:1}
.l{display:flex;align-items:center;gap:7px;margin-right:14px}.l b{font-weight:400;background:#3467c6;padding:1px 1px}
.l ui-icon+ui-icon{margin-left:4px}
.y{display:flex;align-items:center;background:linear-gradient(#1ba2f0 0,#2ab5fa 2px,#1290e8 6px,#1391ea 24px,#0f72c4);border-left:1px solid #0d3a91;padding-right:13px;gap:3px}
.y time{margin-left:4px}.y ui-icon:first-child{margin-left:-10px}</style>
<button class="st"><ui-icon name="flag"></ui-icon>пуск</button>
<div class="t"><task-button icon="ff">Яндекс - Mozilla Firefox</task-button><task-button icon="word" on>ВОРД _ Планируемы...</task-button><task-button icon="floppy">Total Commander 8.0...</task-button></div>
<div class="l"><b>RU</b><ui-icon name="langhelp"></ui-icon><ui-icon name="minirest"></ui-icon></div>
<div class="y"><ui-icon name="chev"></ui-icon><ui-icon name="net"></ui-icon><time>18:48</time></div>`);

define('word-app', `<style>${RESET}
:host{display:flex;flex-direction:column;height:100vh;background:#9bbae1}
main{display:flex;flex:1;min-height:0}</style>
<title-bar></title-bar><tab-row></tab-row><ribbon-bar></ribbon-bar><quick-bar></quick-bar>
<main><doc-view></doc-view><doc-scroll></doc-scroll><task-pane></task-pane></main>
<status-bar></status-bar><xp-taskbar></xp-taskbar>`);
</script>
</body>
</html>
